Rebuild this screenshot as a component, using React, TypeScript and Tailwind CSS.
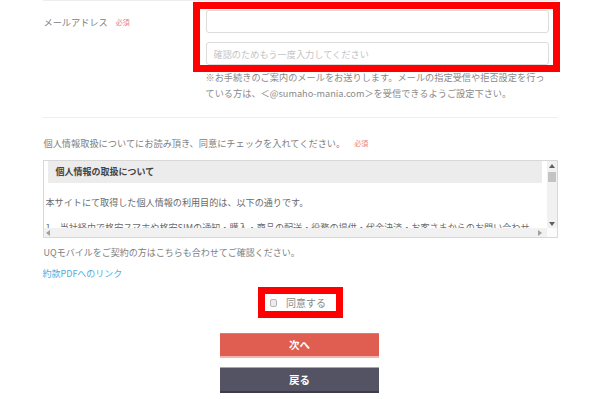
import React from 'react';

const font = { fontFamily: '"Noto Sans CJK JP", "Noto Sans", sans-serif' };

const Required = ({ className = '' }: { className?: string }) => (
  <span className={`text-[7px] text-[#f07c7c] ${className}`}>必須</span>
);

const Tri = ({ dir }: { dir: 'up' | 'down' | 'left' | 'right' }) => {
  const pts = {
    up: '0,4 3,0 6,4',
    down: '0,0 6,0 3,4',
    left: '4,0 4,6 0,3',
    right: '0,0 0,6 4,3',
  }[dir];
  const vertical = dir === 'up' || dir === 'down';
  return (
    <svg width={vertical ? 6 : 4} height={vertical ? 4 : 6} viewBox={vertical ? '0 0 6 4' : '0 0 4 6'}>
      <polygon points={pts} fill={dir === 'left' || dir === 'right' ? '#a0a0a0' : '#606060'} />
    </svg>
  );
};

export default function App() {
  return (
    <div className="w-[600px] h-[399px] bg-white overflow-hidden" style={font}>
      <div className="w-[515px] mx-auto">
        {/* メールアドレス */}
        <div className="flex items-start border-t border-b border-[#eeeeee] pt-[9px] pb-[16px]">
          <div className="w-[163px] pl-[1px] mt-[4px] leading-[16px] text-[9.2px] text-[#808080] flex items-center">
            <span>メールアドレス</span>
            <Required className="ml-[8px]" />
          </div>
          <div className="w-[343px]">
            <div className="relative flex flex-col gap-[9px]">
              <input className="h-[23px] w-full border border-[#dcdcdc] rounded-[3px] px-[7px] text-[9.2px] outline-none" />
              <input
                className="h-[23px] w-full border border-[#dcdcdc] rounded-[3px] px-[7px] text-[9.2px] outline-none placeholder:text-[#c4c4c4]"
                placeholder="確認のためもう一度入力してください"
              />
              <div className="absolute -left-[13px] -top-[8px] -right-[11px] -bottom-[7px] border-[7px] border-[#ff0000] pointer-events-none" />
            </div>
            <p className="mt-[4px] text-[9.2px] leading-[16px] text-[#8a8a8a] whitespace-nowrap">
              ※お手続きのご案内のメールをお送りします。メールの指定受信や拒否設定を行っ
              <br />
              ている方は、＜@sumaho-mania.com＞を受信できるようご設定下さい。
            </p>
          </div>
        </div>

        {/* 個人情報 */}
        <div className="pt-[17px]">
          <div className="pl-[1px] leading-[16px] text-[9.2px] text-[#808080] flex items-center">
            <span>個人情報取扱についてにお読み頂き、同意にチェックを入れてください。</span>
            <Required className="ml-[9px]" />
          </div>

          <div className="mt-[9px] h-[78px] border border-[#d8d8d8] flex flex-col">
            <div className="flex h-[67px]">
              <div className="flex-1 overflow-hidden text-[9.1px] text-[#6a6a6a]">
                <div className="ml-[4px] mr-[5px] h-[22px] bg-[#ececec] pl-[8px] flex items-center font-bold text-[9px] text-[#444]">
                  個人情報の取扱について
                </div>
                <p className="mt-[7px] pl-[2px] leading-[25px] whitespace-nowrap">
                  本サイトにて取得した個人情報の利用目的は、以下の通りです。
                </p>
                <p className="pl-[2px] leading-[25px] whitespace-nowrap">
                  1．当社経由で格安スマホや格安SIMの通知・購入・商品の配送・役務の提供・代金決済・お客さまからのお問い合わせ
                </p>
              </div>
              <div className="w-[10px] bg-[#f1f1f1] flex flex-col items-center">
                <div className="h-[9px] flex items-center">
                  <Tri dir="up" />
                </div>
                <div className="w-[8px] h-[10px] bg-[#c3c3c3] mt-[2px]" />
                <div className="flex-1" />
                <div className="h-[9px] flex items-center">
                  <Tri dir="down" />
                </div>
              </div>
            </div>
            <div className="flex h-[9px]">
              <div className="flex-1 bg-[#f1f1f1] flex items-center justify-between px-[2px]">
                <Tri dir="left" />
                <div className="mr-[3px]">
                  <Tri dir="right" />
                </div>
              </div>
              <div className="w-[10px] bg-[#fbfbfb]" />
            </div>
          </div>

          <p className="mt-[7px] pl-[1px] text-[9px] leading-[16px] text-[#808080]">
            UQモバイルをご契約の方はこちらも合わせてご確認ください。
          </p>
          <p className="mt-[5px] text-[9px] leading-[16px] text-[#5aa9d6]">約款PDFへのリンク</p>
        </div>

        {/* 同意 */}
        <div className="mt-[5px] flex justify-center">
          <label className="ml-[1px] w-[85px] h-[31px] border-[7px] border-[#ff0000] bg-white flex items-center pl-[5px] gap-[9px]">
            <span className="w-[7px] h-[8px] rounded-[2px] border border-[#b5b5b5] bg-[#ececec]" />
            <span className="text-[10px] text-[#888] leading-none">同意する</span>
          </label>
        </div>

        {/* buttons */}
        <div className="mt-[15px] flex flex-col items-center gap-[9px]">
          <button className="ml-[-1px] w-[159px] h-[25px] bg-[#e05d51] border-t border-[#e6786e] border-b-[2px] border-b-[#f4b4ae] text-white font-bold text-[10.5px]">
            次へ
          </button>
          <button className="ml-[-1px] w-[159px] h-[26px] bg-[#545364] border-t border-[#a8a7b0] border-b-[2px] border-b-[#3d3c4b] text-white font-bold text-[10.5px]">
            戻る
          </button>
        </div>
      </div>
    </div>
  );
}
